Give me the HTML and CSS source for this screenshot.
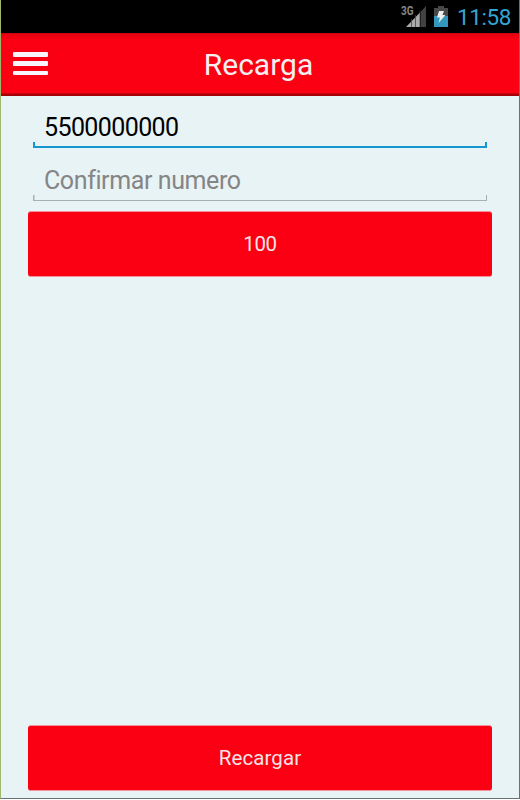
FILE: index.html
```html
<!DOCTYPE html>
<html lang="es">
<head>
<meta charset="utf-8">
<title>Recarga</title>
<link rel="stylesheet" href="styles.css">
</head>
<body>
<div class="screen">
  <div class="status">
    <svg class="signal" width="26" height="24" viewBox="0 0 26 24">
      <text x="0" y="10.3" textLength="12.5" lengthAdjust="spacingAndGlyphs" class="net">3G</text>
      <path d="M5 22L19 7.5V22Z" fill="#aaa"/>
      <path d="M19.8 22V6.5L25 1V22Z" fill="#414141"/>
      <path d="M10.5 14V22M14.5 10V22M19 6V22" stroke="#444" stroke-width=".8"/>
    </svg>
    <svg class="battery" width="14" height="21" viewBox="0 0 14 21">
      <path d="M0 2H4V0H10V2H14V10H0Z" fill="#484848"/>
      <path d="M0 10H14V21H0Z" fill="#3296bd"/>
      <path d="M5 5H10L8.5 9H11.5L4.5 17L6 11.5H3Z" fill="#eee"/>
    </svg>
    <span class="clock">11:58</span>
  </div>
  <header class="bar">
    <div class="menu"><i></i><i></i><i></i></div>
    <h1>Recarga</h1>
  </header>
  <main>
    <div class="field active"><span class="number">5500000000</span></div>
    <div class="field"><span class="hint">Confirmar numero</span></div>
    <button class="amount"><span>100</span></button>
    <button class="submit"><span>Recargar</span></button>
  </main>
</div>
</body>
</html>
```
FILE: styles.css
```css
* { box-sizing: border-box; }
body { margin: 0; background: #fff; font-family: Roboto, "Liberation Sans", sans-serif; }
.screen { width: 520px; height: 799px; display: flex; flex-direction: column; background: #e8f3f6; border-left: 1px solid #9eb86d; border-right: 1px solid #687174; border-bottom: 1px solid #687174; }
.status { height: 33px; flex: none; background: #000; display: flex; align-items: flex-start; justify-content: flex-end; padding-right: 8px; }
.signal { margin: 5px 7px 0 0; }
.net { font: bold 12px Roboto, sans-serif; fill: #888; }
.battery { margin: 6px 9px 0 0; }
.clock { color: #33a5d6; font-size: 22.5px; line-height: 35px; width: 54px; white-space: nowrap; letter-spacing: -.4px; }
.bar { height: 63px; flex: none; display: grid; grid-template-columns: 48px 1fr 48px; background: linear-gradient(#b9000c, #e60010 1px, #fb0012 7px, #fb0012 60px, #a50008 61px, #a50008); }
.menu { margin: 19px 0 0 12px; width: 35px; display: flex; flex-direction: column; gap: 4.5px; }
.menu i { height: 4.8px; background: #f8f5fa; border-radius: 1px; box-shadow: 0 0 1px #8f2028; }
h1 { margin: 0 3px 0 0; font-size: 30px; font-weight: 400; line-height: 63px; text-align: center; color: #f3eff0; letter-spacing: 0; }
main { flex: 1; display: flex; flex-direction: column; padding: 0 27px 7px; }
.field { height: 53px; margin: 0 5px; padding-left: 11px; font-size: 25px; line-height: 65px; background: linear-gradient(#a5b0b2, #a5b0b2) 0 100% / 100% 1.5px no-repeat, linear-gradient(#a5b0b2, #a5b0b2) 0 100% / 1.5px 6px no-repeat, linear-gradient(#a5b0b2, #a5b0b2) 100% 100% / 1.5px 6px no-repeat; color: #858585; }
.active { height: 52px; line-height: 63px; color: #000; background: linear-gradient(#1497cf, #1497cf) 0 100% / 100% 2px no-repeat, linear-gradient(#1497cf, #1497cf) 0 100% / 2px 6px no-repeat, linear-gradient(#1497cf, #1497cf) 100% 100% / 2px 6px no-repeat; }
.number { letter-spacing: -.6px; }
.hint { letter-spacing: -.4px; }
button { display: block; width: 100%; height: 66px; flex: none; border: 0; border-top: 1px solid #f5919a; border-bottom: 1px solid #f5919a; border-radius: 3px; background: #fb0012; color: #f4e4e7; font: 20.5px Roboto, sans-serif; padding: 0; letter-spacing: .1px; }
.amount { margin-top: 10px; }
.amount span { letter-spacing: -.4px; }
.submit { margin-top: auto; }
```
